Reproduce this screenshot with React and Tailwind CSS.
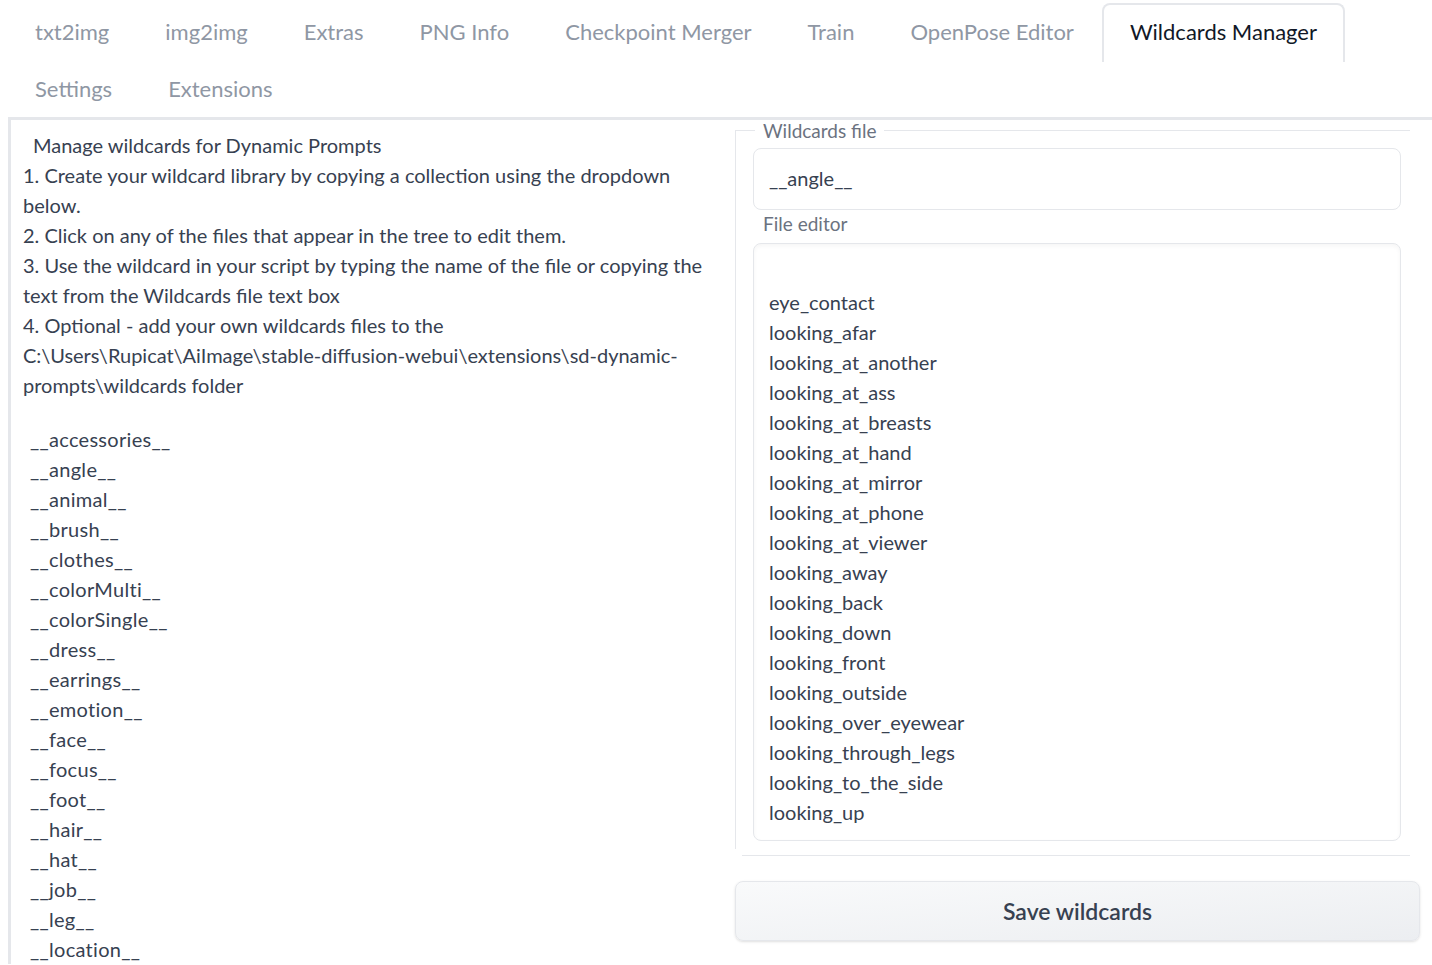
const tabs1 = ['txt2img', 'img2img', 'Extras', 'PNG Info', 'Checkpoint Merger', 'Train', 'OpenPose Editor']
const tabs2 = ['Settings', 'Extensions']

const files = [
  'accessories', 'angle', 'animal', 'brush', 'clothes', 'colorMulti', 'colorSingle', 'dress',
  'earrings', 'emotion', 'face', 'focus', 'foot', 'hair', 'hat', 'job', 'leg', 'location',
]

const lines = [
  '', 'eye_contact', 'looking_afar', 'looking_at_another', 'looking_at_ass', 'looking_at_breasts',
  'looking_at_hand', 'looking_at_mirror', 'looking_at_phone', 'looking_at_viewer', 'looking_away',
  'looking_back', 'looking_down', 'looking_front', 'looking_outside', 'looking_over_eyewear',
  'looking_through_legs', 'looking_to_the_side', 'looking_up',
]

export default function App() {
  return (
    <div className="h-[965px] overflow-hidden bg-white text-[#374151] font-['Lato','Roboto',sans-serif]">
      {/* tab strip */}
      <div className="flex flex-wrap pl-[7px] pt-[3px]">
        {tabs1.map((t) => (
          <button key={t} className="h-[58px] px-[28px] text-[22px] text-[#8f97a4] leading-none">{t}</button>
        ))}
        <button className="h-[59px] -mb-[1px] px-[26px] pb-[3px] text-[22px] text-[#111827] leading-none border-2 border-b-0 border-[#e5e7eb] rounded-t-lg bg-white">
          Wildcards Manager
        </button>
        <div className="w-full" />
        {tabs2.map((t) => (
          <button key={t} className="h-[56px] px-[28px] text-[22px] text-[#8f97a4] leading-none">{t}</button>
        ))}
      </div>

      {/* panel */}
      <div className="ml-[8px] border-t-[3px] border-l-[3px] border-[#e5e7eb] flex gap-[15px] pr-[12px]">
        {/* left column */}
        <div className="w-[709px] shrink-0 pl-[12px] pr-[12px] pt-[10px] text-[20px] leading-[30px]">
          <div className="pl-[10px]">Manage wildcards for Dynamic Prompts</div>
          <div>1. Create your wildcard library by copying a collection using the dropdown below.</div>
          <div>2. Click on any of the files that appear in the tree to edit them.</div>
          <div>3. Use the wildcard in your script by typing the name of the file or copying the text from the Wildcards file text box</div>
          <div>4. Optional - add your own wildcards files to the</div>
          <div>C:\Users\Rupicat\AiImage\stable-diffusion-webui\extensions\sd-dynamic-prompts\wildcards folder</div>

          <ul className="mt-[24px] pl-[7px] tracking-[0.3px]">
            {files.map((f) => (
              <li key={f}>__{f}__</li>
            ))}
          </ul>
        </div>

        {/* right column */}
        <div className="flex-1 pt-[1px]">
          <fieldset className="mr-[10px] border-t border-l border-[#e5e7eb] pl-[17px] pr-[9px] pb-[8px]">
            <legend className="px-[8px] ml-[2px] text-[19px] text-[#6b7280] leading-none">Wildcards file</legend>
            <div className="mt-[8px] h-[62px] rounded-lg border border-[#e5e7eb] flex items-center px-[15px] pb-[3px] text-[20px]">
              __angle__
            </div>
            <div className="pl-[10px] pt-0 pb-[5px] text-[19px] text-[#6b7280] leading-[28px]">File editor</div>
            <div className="h-[598px] rounded-lg border border-[#e5e7eb] shadow-[inset_0_2px_4px_rgba(0,0,0,0.04)] px-[15px] pt-[13px] text-[20px] leading-[30px]">
              {lines.map((l, i) => (
                <div key={i} className="h-[30px]">{l}</div>
              ))}
            </div>
          </fieldset>
          <div className="mt-[6px] ml-[7px] mr-[10px] border-t border-[#e5e7eb]" />
          <button className="mt-[25px] w-full h-[60px] rounded-lg border border-[#e5e7eb] bg-gradient-to-br from-[#f9fafb] to-[#eceef1] shadow-sm text-[23px] font-semibold text-[#374151]">
            Save wildcards
          </button>
        </div>
      </div>
    </div>
  )
}
